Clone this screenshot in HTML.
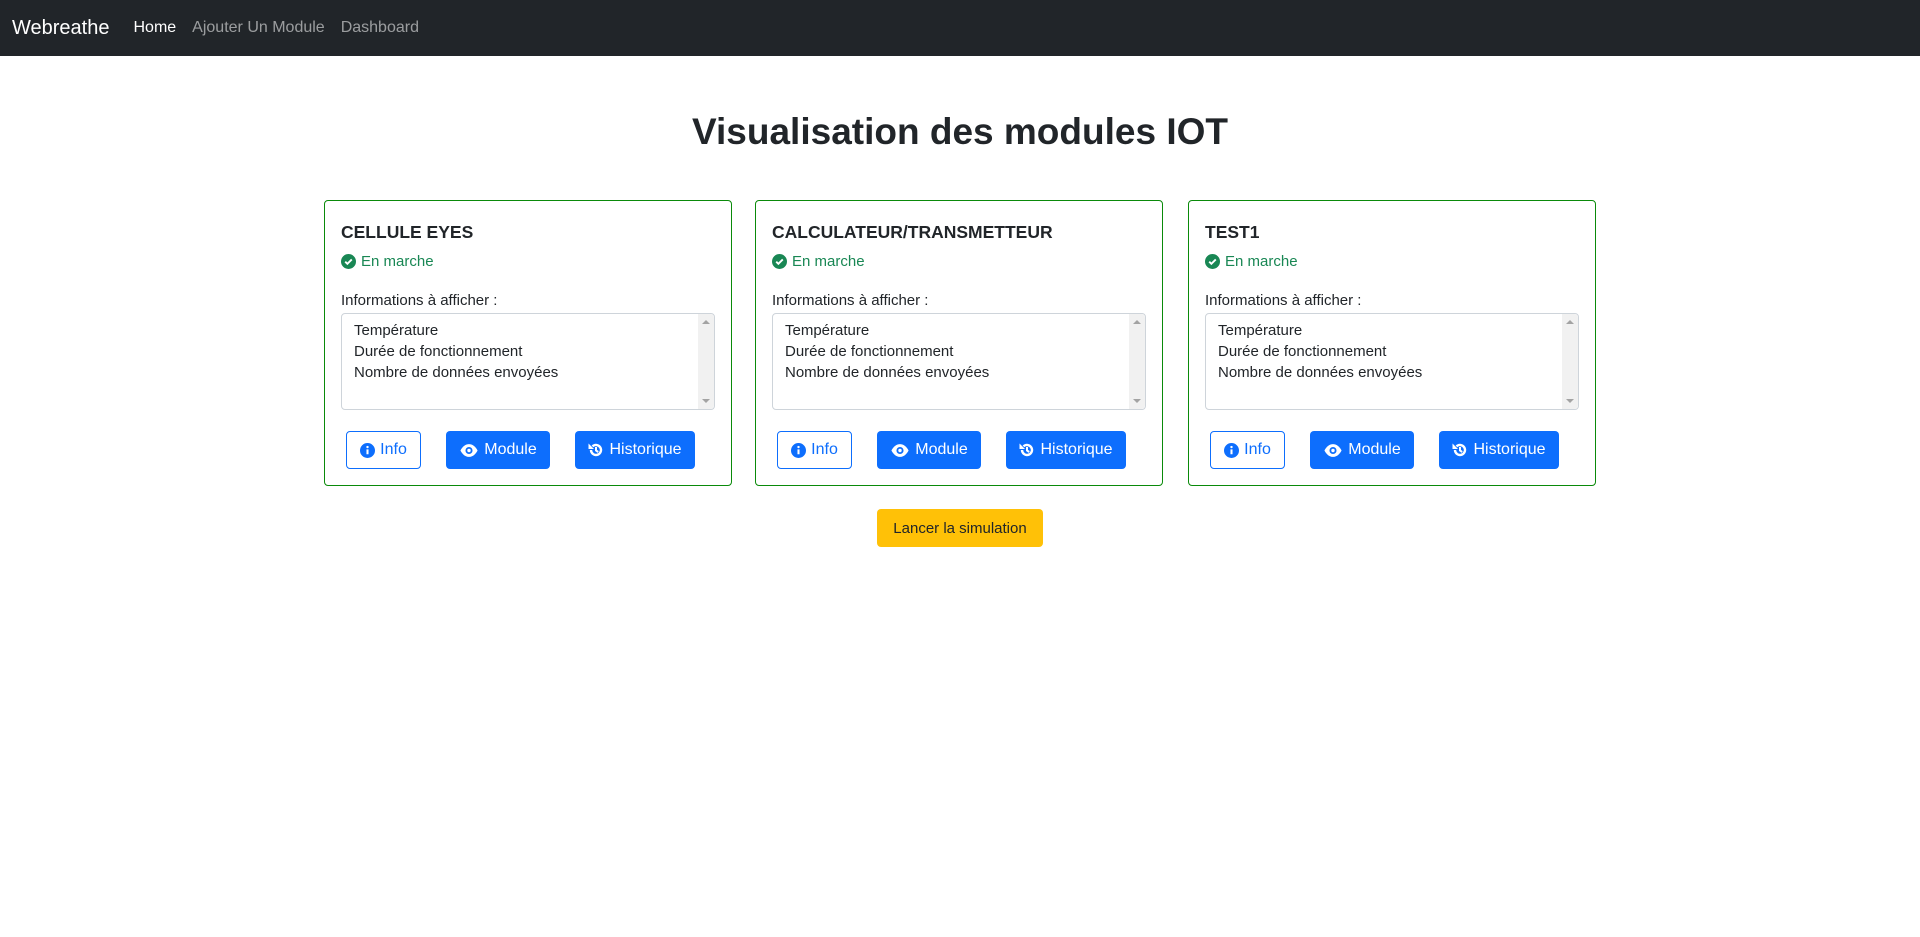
<!DOCTYPE html>
<html><head><meta charset="utf-8"><style>
*{box-sizing:border-box;margin:0;padding:0}
body{width:1920px;height:937px;background:#fff;font-family:"Liberation Sans",sans-serif;color:#212529;font-size:16px;overflow:hidden}
nav{height:56px;background:#212529;display:flex;align-items:center;padding-left:12px}
.brand{color:#fff;font-size:20px;margin-right:24px}
nav a{color:rgba(255,255,255,.55);font-size:16px;margin-right:16px}
nav a.act{color:#fff}
h1{text-align:center;font-size:37px;font-weight:700;margin-top:51px;height:50px;line-height:50px}
.card{position:absolute;top:0;width:408px;height:286px;border:1px solid #0a8a0a;border-radius:4px;padding:16px}
.t{font-size:17.5px;font-weight:700;margin-top:3px;height:24px;line-height:24px}
.st{color:#198754;margin-top:9px;display:flex;align-items:center;font-size:15px}
.st svg{margin-right:5px}
.lab{margin-top:22px;font-size:15px}
.ta{margin-top:4px;height:97px;border:1px solid #ced4da;border-radius:4px;padding:6px 12px;font-size:15px;line-height:21px;position:relative}
.sb{position:absolute;right:0;top:0;bottom:0;width:16px;background:#f1f1f1;border-radius:0 4px 4px 0}
.sb:before{content:"";position:absolute;left:4px;top:6px;border:4px solid transparent;border-bottom-color:#a3a3a3;border-top:0}
.sb:after{content:"";position:absolute;left:4px;bottom:6px;border:4px solid transparent;border-top-color:#a3a3a3;border-bottom:0}
.btns{position:absolute;top:230px;left:0;width:100%}
.b{position:absolute;height:38px;border-radius:4px;display:flex;align-items:center;justify-content:center;font-size:16px}
.o{border:1px solid #0d6efd;color:#0d6efd}
.p{background:#0d6efd;color:#fff}
.b svg{margin-right:5px}
.sim{position:absolute;left:877px;top:509px;width:166px;height:38px;background:#ffc107;border-radius:4px;display:flex;align-items:center;justify-content:center;font-size:15px}
</style></head><body>
<nav><span class="brand">Webreathe</span><a class="act">Home</a><a>Ajouter Un Module</a><a>Dashboard</a></nav>
<h1>Visualisation des modules IOT</h1>
<div class="sim">Lancer la simulation</div>
<div style="position:absolute;top:200px;left:324px">
<div class="card" style="left:0"><div class="t">CELLULE EYES</div><div class="st"><svg width="15" height="15" viewBox="0 0 16 16"><circle cx="8" cy="8" r="8" fill="#198754"/><path d="M4.5 8.2l2.3 2.3 4.7-4.7" stroke="#fff" stroke-width="2" fill="none"/></svg>En marche</div><div class="lab">Informations à afficher :</div><div class="ta">Température<br>Durée de fonctionnement<br>Nombre de données envoyées<div class="sb"></div></div><div class="btns"><div class="b o" style="left:21px;width:75px"><svg width="15" height="15" viewBox="0 0 16 16"><circle cx="8" cy="8" r="8" fill="#0d6efd"/><rect x="6.9" y="6.8" width="2.2" height="5.2" fill="#fff"/><circle cx="8" cy="4.3" r="1.3" fill="#fff"/></svg>Info</div><div class="b p" style="left:121px;width:104px"><svg width="20" height="15" viewBox="0 0 18 14"><path d="M1 7C3 3 6 1 9 1s6 2 8 6c-2 4-5 6-8 6S3 11 1 7z" fill="#fff"/><circle cx="9" cy="7" r="3.3" fill="#0d6efd"/><circle cx="9" cy="7" r="1.6" fill="#fff"/></svg>Module</div><div class="b p" style="left:250px;width:120px"><svg width="16" height="16" viewBox="0 0 16 16"><path d="M3 8a5 5 0 1 0 1.5-3.6" stroke="#fff" stroke-width="2.4" fill="none"/><path d="M0.5 1.5v5.5h5.5z" fill="#fff"/><path d="M8 5v3.5l2.2 1.5" stroke="#fff" stroke-width="2" fill="none"/></svg>Historique</div></div></div>
<div class="card" style="left:431px"><div class="t">CALCULATEUR/TRANSMETTEUR</div><div class="st"><svg width="15" height="15" viewBox="0 0 16 16"><circle cx="8" cy="8" r="8" fill="#198754"/><path d="M4.5 8.2l2.3 2.3 4.7-4.7" stroke="#fff" stroke-width="2" fill="none"/></svg>En marche</div><div class="lab">Informations à afficher :</div><div class="ta">Température<br>Durée de fonctionnement<br>Nombre de données envoyées<div class="sb"></div></div><div class="btns"><div class="b o" style="left:21px;width:75px"><svg width="15" height="15" viewBox="0 0 16 16"><circle cx="8" cy="8" r="8" fill="#0d6efd"/><rect x="6.9" y="6.8" width="2.2" height="5.2" fill="#fff"/><circle cx="8" cy="4.3" r="1.3" fill="#fff"/></svg>Info</div><div class="b p" style="left:121px;width:104px"><svg width="20" height="15" viewBox="0 0 18 14"><path d="M1 7C3 3 6 1 9 1s6 2 8 6c-2 4-5 6-8 6S3 11 1 7z" fill="#fff"/><circle cx="9" cy="7" r="3.3" fill="#0d6efd"/><circle cx="9" cy="7" r="1.6" fill="#fff"/></svg>Module</div><div class="b p" style="left:250px;width:120px"><svg width="16" height="16" viewBox="0 0 16 16"><path d="M3 8a5 5 0 1 0 1.5-3.6" stroke="#fff" stroke-width="2.4" fill="none"/><path d="M0.5 1.5v5.5h5.5z" fill="#fff"/><path d="M8 5v3.5l2.2 1.5" stroke="#fff" stroke-width="2" fill="none"/></svg>Historique</div></div></div>
<div class="card" style="left:864px"><div class="t">TEST1</div><div class="st"><svg width="15" height="15" viewBox="0 0 16 16"><circle cx="8" cy="8" r="8" fill="#198754"/><path d="M4.5 8.2l2.3 2.3 4.7-4.7" stroke="#fff" stroke-width="2" fill="none"/></svg>En marche</div><div class="lab">Informations à afficher :</div><div class="ta">Température<br>Durée de fonctionnement<br>Nombre de données envoyées<div class="sb"></div></div><div class="btns"><div class="b o" style="left:21px;width:75px"><svg width="15" height="15" viewBox="0 0 16 16"><circle cx="8" cy="8" r="8" fill="#0d6efd"/><rect x="6.9" y="6.8" width="2.2" height="5.2" fill="#fff"/><circle cx="8" cy="4.3" r="1.3" fill="#fff"/></svg>Info</div><div class="b p" style="left:121px;width:104px"><svg width="20" height="15" viewBox="0 0 18 14"><path d="M1 7C3 3 6 1 9 1s6 2 8 6c-2 4-5 6-8 6S3 11 1 7z" fill="#fff"/><circle cx="9" cy="7" r="3.3" fill="#0d6efd"/><circle cx="9" cy="7" r="1.6" fill="#fff"/></svg>Module</div><div class="b p" style="left:250px;width:120px"><svg width="16" height="16" viewBox="0 0 16 16"><path d="M3 8a5 5 0 1 0 1.5-3.6" stroke="#fff" stroke-width="2.4" fill="none"/><path d="M0.5 1.5v5.5h5.5z" fill="#fff"/><path d="M8 5v3.5l2.2 1.5" stroke="#fff" stroke-width="2" fill="none"/></svg>Historique</div></div></div>
</div>
</body></html>
